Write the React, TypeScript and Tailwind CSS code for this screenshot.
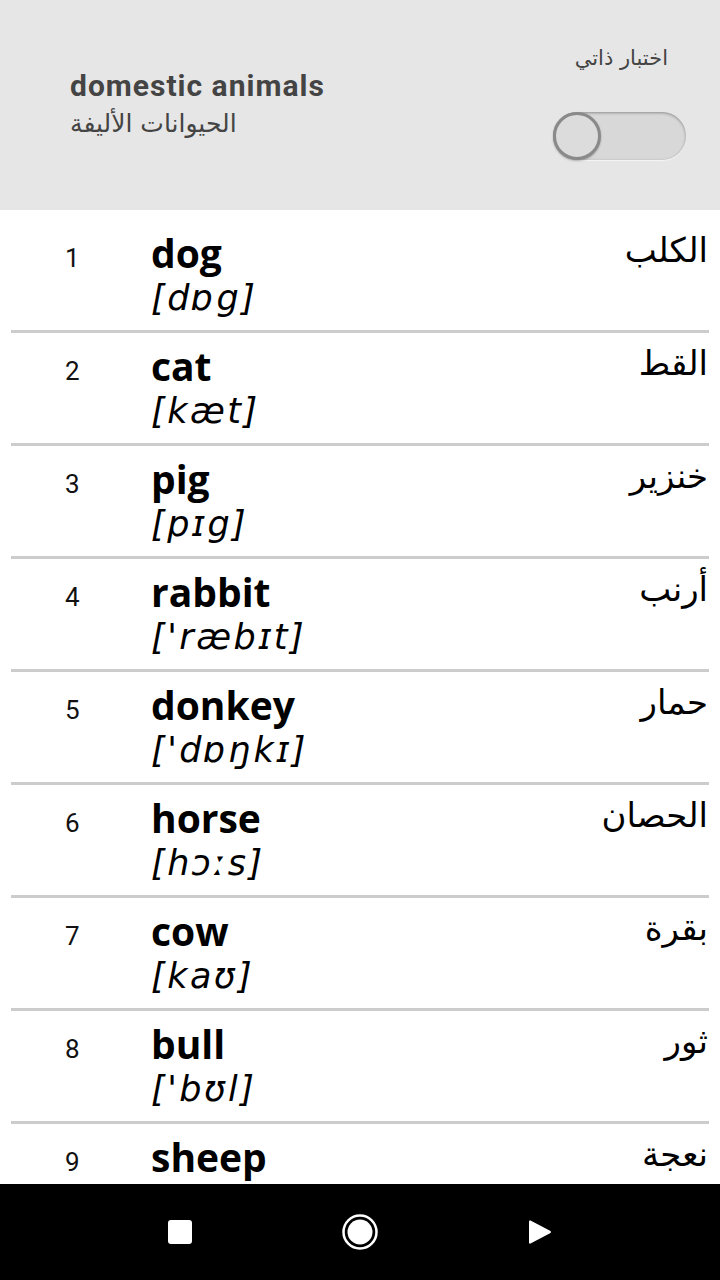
const words = [
  { n: 1, en: 'dog', ipa: '[dɒg]', ar: 'الكلب' },
  { n: 2, en: 'cat', ipa: '[kæt]', ar: 'القط' },
  { n: 3, en: 'pig', ipa: '[pɪg]', ar: 'خنزير' },
  { n: 4, en: 'rabbit', ipa: "['ræbɪt]", ar: 'أرنب' },
  { n: 5, en: 'donkey', ipa: "['dɒŋkɪ]", ar: 'حمار' },
  { n: 6, en: 'horse', ipa: '[hɔːs]', ar: 'الحصان' },
  { n: 7, en: 'cow', ipa: '[kaʊ]', ar: 'بقرة' },
  { n: 8, en: 'bull', ipa: "['bʊl]", ar: 'ثور' },
  { n: 9, en: 'sheep', ipa: '[ʃiːp]', ar: 'نعجة' },
];

function Row({ n, en, ipa, ar }: { n: number; en: string; ipa: string; ar: string }) {
  return (
    <div>
      <div className="flex h-[110px] pt-[10px]">
        <div className="w-[151px] pl-[65px] pt-[10px] text-[26px] leading-[36px] text-[#111] font-['Roboto',sans-serif]">
          {n}
        </div>
        <div className="flex-1 text-black">
          <div className="font-['Open_Sans',sans-serif] text-[39px] font-bold leading-[46px]">{en}</div>
          <div className="font-['DejaVu_Sans',sans-serif] text-[35px] italic tracking-[2.5px] leading-[44px]">{ipa}</div>
        </div>
        <div
          dir="rtl"
          className="-mt-[3px] pr-[12px] text-[34px] leading-[46px] text-black font-['DejaVu_Sans','Noto_Sans',sans-serif]"
        >
          {ar}
        </div>
      </div>
      <div className="mx-[11px] h-[3px] bg-[#cccccc]" />
    </div>
  );
}

export default function App() {
  return (
    <div className="h-[1280px] w-[720px] overflow-hidden bg-white">
      {/* header */}
      <div className="flex h-[210px] items-start justify-between bg-[#e6e6e6] pl-[70px] pr-[34px]">
        <div className="pt-[66px] text-[#444]">
          <div className="font-['Roboto',sans-serif] text-[30px] font-bold tracking-[1px] leading-[40px]">domestic animals</div>
          <div dir="rtl" className="text-left font-['DejaVu_Sans',sans-serif] text-[25px] leading-[36px]">
            الحيوانات الأليفة
          </div>
        </div>
        <div className="flex flex-col items-end pt-[43px]">
          <div dir="rtl" className="pr-[18px] font-['DejaVu_Sans',sans-serif] text-[21px] leading-[30px] text-[#444]">
            اختبار ذاتي
          </div>
          <div className="relative mt-[39px] h-[48px] w-[133px] rounded-full bg-[#d8d8d8] shadow-[inset_0_1px_3px_rgba(0,0,0,0.35),0_1px_1px_rgba(255,255,255,0.6)]">
            <div className="absolute left-0 top-0 h-[48px] w-[48px] rounded-full border-[3px] border-[#8a8a8a] bg-[#dcdcdc] shadow-[0_1px_2px_rgba(0,0,0,0.3)]" />
          </div>
        </div>
      </div>

      {/* list */}
      <div className="h-[974px] overflow-hidden pt-[10px]">
        {words.map((w) => (
          <Row key={w.n} {...w} />
        ))}
      </div>

      {/* nav bar */}
      <div className="flex h-[96px] items-center justify-center gap-[132px] bg-black">
        <div className="flex w-[48px] justify-center">
          <div className="h-[24px] w-[24px] rounded-[3px] bg-white" />
        </div>
        <div className="flex w-[48px] justify-center">
          <svg width="36" height="36" viewBox="0 0 36 36">
            <circle cx="18" cy="18" r="16.5" fill="none" stroke="white" strokeWidth="2.5" />
            <circle cx="18" cy="18" r="12.5" fill="white" />
          </svg>
        </div>
        <div className="flex w-[48px] justify-center">
          <svg width="24" height="26" viewBox="0 0 24 26">
            <path d="M2.5 1.5 L22.5 12 Q23.5 13 22.5 14 L2.5 24.5 Q1 25 1 23.5 V2.5 Q1 1 2.5 1.5 Z" fill="white" />
          </svg>
        </div>
      </div>
    </div>
  );
}
